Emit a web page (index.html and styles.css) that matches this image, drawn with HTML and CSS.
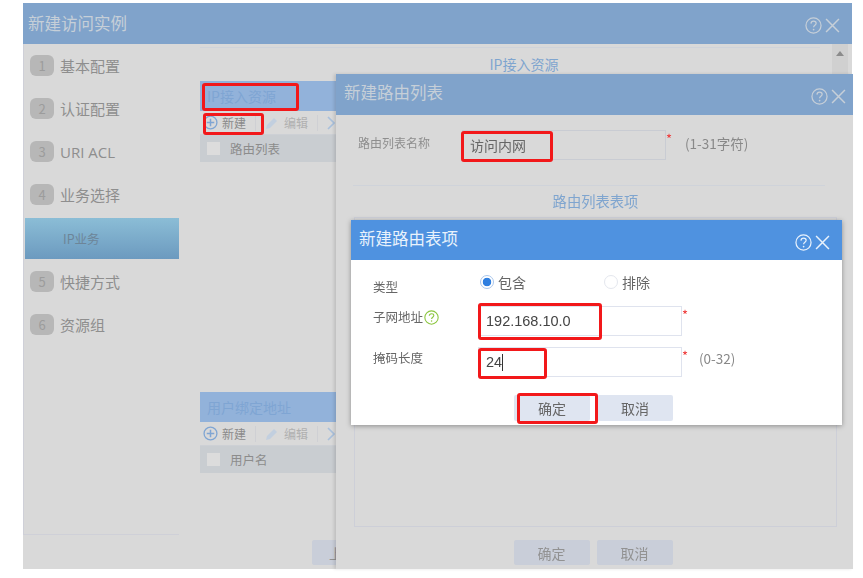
FILE: index.html
```html
<!DOCTYPE html>
<html lang="zh-CN">
<head>
<meta charset="utf-8">
<title>新建访问实例</title>
<link rel="stylesheet" href="styles.css">
</head>
<body>
<svg class="defs" width="0" height="0" aria-hidden="true">
  <symbol id="help" viewBox="0 0 18 18"><circle cx="9" cy="9" r="8" fill="none" stroke="currentColor" stroke-width="1.3"/><path d="M6.3 7c.1-1.7 1.3-2.6 2.8-2.6 1.6 0 2.7 1 2.7 2.3 0 2-2.7 2.1-2.7 4.2" fill="none" stroke="currentColor" stroke-width="1.3"/><circle cx="9.1" cy="13.3" r=".9" fill="currentColor"/></symbol>
  <symbol id="close" viewBox="0 0 14 14"><path d="M1 1l12 12M13 1L1 13" fill="none" stroke="currentColor" stroke-width="1.4"/></symbol>
  <symbol id="plus" viewBox="0 0 14 14"><circle cx="7" cy="7" r="6" fill="none" stroke="currentColor" stroke-width="1.2"/><path d="M7 3.5v7M3.5 7h7" fill="none" stroke="currentColor" stroke-width="1.4"/></symbol>
  <symbol id="pencil" viewBox="0 0 14 14"><path d="M1 13l1-4 7-7 3 3-7 7z" fill="currentColor"/></symbol>
  <symbol id="chevron" viewBox="0 0 8 14"><path d="M1 1l6 6-6 6" fill="none" stroke="currentColor" stroke-width="1.6"/></symbol>
</svg>

<div class="stage">
  <section class="win win-outer">
    <header class="title title-dim">
      <span>新建访问实例</span>
      <span class="title-icons"><svg class="ic-help"><use href="#help"/></svg><svg class="ic-close"><use href="#close"/></svg></span>
    </header>
    <div class="outer-body">
      <nav class="side">
        <div class="step"><b>1</b>基本配置</div>
        <div class="step"><b>2</b>认证配置</div>
        <div class="step"><b>3</b><span class="latin">URI ACL</span></div>
        <div class="step"><b>4</b>业务选择</div>
        <div class="step-sub">IP业务</div>
        <div class="step"><b>5</b>快捷方式</div>
        <div class="step"><b>6</b>资源组</div>
      </nav>
      <main class="main">
        <div class="main-scroll">
          <h3 class="sec-heading">IP接入资源</h3>
          <div class="panel">
            <div class="panel-head">IP接入资源</div>
            <div class="toolbar">
              <svg class="ic-plus"><use href="#plus"/></svg><span class="tool-on">新建</span><i class="sep"></i>
              <svg class="ic-pencil"><use href="#pencil"/></svg><span class="tool-off">编辑</span><i class="sep"></i><svg class="ic-chev"><use href="#chevron"/></svg>
            </div>
            <div class="thead"><i class="check"></i>路由列表</div>
          </div>
          <div class="panel panel-second">
            <div class="panel-head">用户绑定地址</div>
            <div class="toolbar">
              <svg class="ic-plus"><use href="#plus"/></svg><span class="tool-on">新建</span><i class="sep"></i>
              <svg class="ic-pencil"><use href="#pencil"/></svg><span class="tool-off">编辑</span><i class="sep"></i><svg class="ic-chev"><use href="#chevron"/></svg>
            </div>
            <div class="thead"><i class="check"></i>用户名</div>
          </div>
          <div class="outer-foot"><span class="btn btn-dim">上一步</span></div>
        </div>
        <div class="scrollbar"><span class="arrow"></span></div>
      </main>
    </div>
  </section>

  <section class="win win-mid">
    <header class="title title-dim">
      <span>新建路由列表</span>
      <span class="title-icons"><svg class="ic-help"><use href="#help"/></svg><svg class="ic-close"><use href="#close"/></svg></span>
    </header>
    <div class="mid-body">
      <div class="name-row">
        <label class="name-label">路由列表名称</label>
        <div class="field field-dim">访问内网</div>
        <span class="star">*</span>
        <span class="hint">(1-31字符)</span>
      </div>
      <hr class="rule">
      <h3 class="sec-heading mid-heading">路由列表表项</h3>
      <div class="table-box"></div>
      <div class="btn-row">
        <span class="btn btn-dim">确定</span>
        <span class="btn btn-dim">取消</span>
      </div>
    </div>
  </section>

  <section class="win win-top">
    <header class="title title-live">
      <span>新建路由表项</span>
      <span class="title-icons"><svg class="ic-help"><use href="#help"/></svg><svg class="ic-close"><use href="#close"/></svg></span>
    </header>
    <div class="top-body">
      <div class="row row-type">
        <label class="row-label">类型</label>
        <div class="radios">
          <span class="radio radio-on"></span><span class="radio-text">包含</span>
          <span class="radio radio-off"></span><span class="radio-text">排除</span>
        </div>
      </div>
      <div class="row">
        <label class="row-label">子网地址<svg class="ic-tip"><use href="#help"/></svg></label>
        <div class="field">192.168.10.0</div>
        <span class="star">*</span>
      </div>
      <div class="row">
        <label class="row-label">掩码长度</label>
        <div class="field">24<i class="caret"></i></div>
        <span class="star">*</span>
        <span class="hint">(0-32)</span>
      </div>
      <div class="btn-row btn-row-top">
        <span class="btn btn-live">确定</span>
        <span class="btn btn-live">取消</span>
      </div>
    </div>
  </section>

  <i class="mark mark-a"></i>
  <i class="mark mark-b"></i>
  <i class="mark mark-c"></i>
  <i class="mark mark-d"></i>
  <i class="mark mark-e"></i>
  <i class="mark mark-f"></i>
</div>
</body>
</html>
```
FILE: styles.css
```css
* { box-sizing: border-box; }
html, body { margin: 0; padding: 0; background: #fff; }
body { width: 863px; height: 578px; overflow: hidden; font-family: "Noto Sans CJK SC", "Liberation Sans", sans-serif; font-size: 13px; }
.defs { position: absolute; }
.stage { position: relative; width: 863px; height: 578px; filter: blur(0.5px); }
h3 { margin: 0; font-weight: 400; }

.win { position: absolute; display: flex; flex-direction: column; background: #d9d9d9; overflow: hidden; }
.win-outer { left: 23px; top: 3px; width: 829px; height: 566px; }
.win-mid { left: 336px; top: 74px; width: 517px; height: 495px; box-shadow: -2px 0 3px rgba(0,0,0,.12); }
.win-top { left: 351px; top: 220px; width: 491px; height: 205px; background: #fff; box-shadow: 0 1px 5px rgba(0,0,0,.35); }

.title { flex: none; height: 41px; display: flex; align-items: center; justify-content: space-between; font-size: 16.5px; padding-bottom: 2px; }
.title-dim { background: #80a3cb; color: #c6cfd8; padding-left: 5px; padding-right: 12px; }
.win-mid .title-dim { padding-left: 8px; padding-right: 7px; padding-bottom: 5px; }
.win-mid .title-icons { margin-top: 9px; }
.title-live { height: 40px; background: #4f92e0; color: #e9f2fc; padding-left: 8px; padding-right: 12px; padding-bottom: 4px; }
.title-icons { display: flex; align-items: center; gap: 3px; margin-top: 6px; }
.title-live .title-icons { margin-top: 8px; }
.ic-help { width: 17px; height: 17px; }
.ic-close { width: 15px; height: 15px; }

.outer-body { flex: 1; display: flex; min-height: 0; }
.side { flex: none; width: 156px; height: 491px; border-left: 1px solid #cfd0d8; border-bottom: 1px solid #cfd0d8; color: #8e8e8e; }
.step { height: 43px; display: flex; align-items: center; padding-left: 6px; font-size: 15px; }
.step b { width: 24px; height: 21px; margin-right: 6px; border-radius: 6px; background: #b7b7b7; color: #9c9c9c; font-weight: 400; font-size: 13px; display: flex; align-items: center; justify-content: center; }
.latin { font-family: "Open Sans", "Liberation Sans", sans-serif; }
.step-sub { height: 41px; margin: 2px 0 1px 1px; padding-left: 38px; display: flex; align-items: center; font-size: 12.5px; background: linear-gradient(#8bbdd6, #6c9abf); color: #6d8598; }

.main { flex: 1; display: flex; min-width: 0; }
.main-scroll { width: 632px; flex: none; margin-left: 21px; }
.sec-heading { color: #7fa5cf; font-size: 14px; text-align: center; line-height: 20px; }
.main-scroll > .sec-heading { padding: 6px 0 0 28px; border-top: 1px solid #cfd3da; margin: 3px 12px 0 0; height: 34px; }
.panel-head { height: 30px; background: #92b2da; color: #7fa5d3; font-size: 14px; line-height: 30px; padding-left: 7px; }
.panel-second { margin-top: 230px; }
.toolbar { height: 24px; display: flex; align-items: center; padding-left: 3px; font-size: 12px; border-bottom: 1px solid #cdd0d5; color: #8a8a8a; }
.ic-plus { width: 15px; height: 15px; color: #7fa5d3; margin-right: 4px; }
.ic-pencil { width: 14px; height: 14px; color: #c2cfdf; margin-right: 5px; }
.tool-off { color: #b0b0b0; }
.sep { width: 1px; height: 16px; background: #cfd0d4; margin: 0 9px; }
.ic-chev { width: 8px; height: 14px; color: #a9c0dc; }
.thead { height: 27px; background: #c9cdd1; display: flex; align-items: center; padding-left: 7px; font-size: 12.5px; color: #8c8c8c; }
.check { width: 13px; height: 13px; background: #dcdcdc; margin-right: 10px; }
.outer-foot { display: flex; padding: 67px 0 0 112px; }
.scrollbar { width: 16px; height: 176px; background: #d0d0d0; display: flex; justify-content: center; padding-top: 7px; }
.arrow { width: 0; height: 0; border-left: 4px solid transparent; border-right: 4px solid transparent; border-bottom: 5px solid #8b8b8b; }

.btn { width: 76px; height: 25px; display: flex; align-items: center; justify-content: center; font-size: 14px; border-radius: 2px; }
.btn-dim { background: #c9ced9; color: #929292; flex: none; }
.btn-live { background: #dfe5f1; color: #666; height: 26px; }
.btn-row { display: flex; gap: 7px; justify-content: center; }

.mid-body { flex: 1; display: flex; flex-direction: column; padding: 15px 16px 3px 18px; }
.name-row { display: flex; align-items: center; height: 30px; color: #8e8e8e; }
.name-label { width: 108px; padding-left: 4px; font-size: 12px; margin-top: -6px; }
.field { height: 30px; border: 1px solid #dfe3ee; display: flex; align-items: center; padding-left: 7px; font-size: 14.5px; color: #444; font-family: "Liberation Sans", "Noto Sans CJK SC", sans-serif; width: 204px; background: #fff; }
.field-dim { background: transparent; border-color: #c9ccd3; color: #666; font-size: 14px; }
.star { align-self: flex-start; color: #ef3a3a; font-size: 13px; line-height: 14px; margin-top: 2px; width: 12px; }
.hint { font-size: 13.5px; color: #888; }
.name-row .hint { margin: -5px 0 0 7px; }
.row .hint { margin: 1px 0 0 5px; }
.rule { border: 0; border-top: 1px solid #cfd3da; margin: 25px 12px 5px -1px; width: 472px; }
.mid-heading { font-size: 14.3px; }
.table-box { flex: none; height: 310px; border: 1px solid #cdcfd8; width: 483px; margin-top: 6px; }
.win-mid .btn-row { margin: 13px 0 0 -5px; }

.top-body { flex: 1; padding: 0 0 0 22px; }
.row { display: flex; align-items: flex-start; margin-bottom: 11px; }
.row-type { height: 46px; margin-bottom: 0; padding-top: 12px; }
.row-label { width: 105px; font-size: 12.5px; line-height: 20px; color: #666; display: flex; align-items: center; padding-top: 1px; }
.row-type .row-label { padding-top: 5px; }
.radios { display: flex; align-items: center; height: 20px; font-size: 14px; color: #666; margin-left: 2px; }
.radio { width: 14px; height: 14px; border-radius: 50%; margin-right: 4px; border: 1px solid #e4e7ee; }
.radio-on { border: 1px solid #a9c6ec; background: radial-gradient(circle, #2f7fe0 0 4px, #fff 4.6px); }
.radio-text { width: 106px; }
.ic-tip { width: 15px; height: 15px; color: #8cc63f; margin-left: 1px; }
.caret { width: 1px; height: 17px; background: #333; }
.btn-row-top { margin: 18px 0 0 -22px; padding-right: 6px; }

.mark { position: absolute; border: 3px solid #f2181a; border-radius: 3px; }
.mark-a { left: 202px; top: 83px; width: 97px; height: 28px; }
.mark-b { left: 203px; top: 113px; width: 61px; height: 22px; }
.mark-c { left: 461px; top: 131px; width: 92px; height: 31px; }
.mark-d { left: 478px; top: 303px; width: 124px; height: 37px; }
.mark-e { left: 478px; top: 348px; width: 69px; height: 31px; }
.mark-f { left: 517px; top: 393px; width: 81px; height: 31px; }
```
